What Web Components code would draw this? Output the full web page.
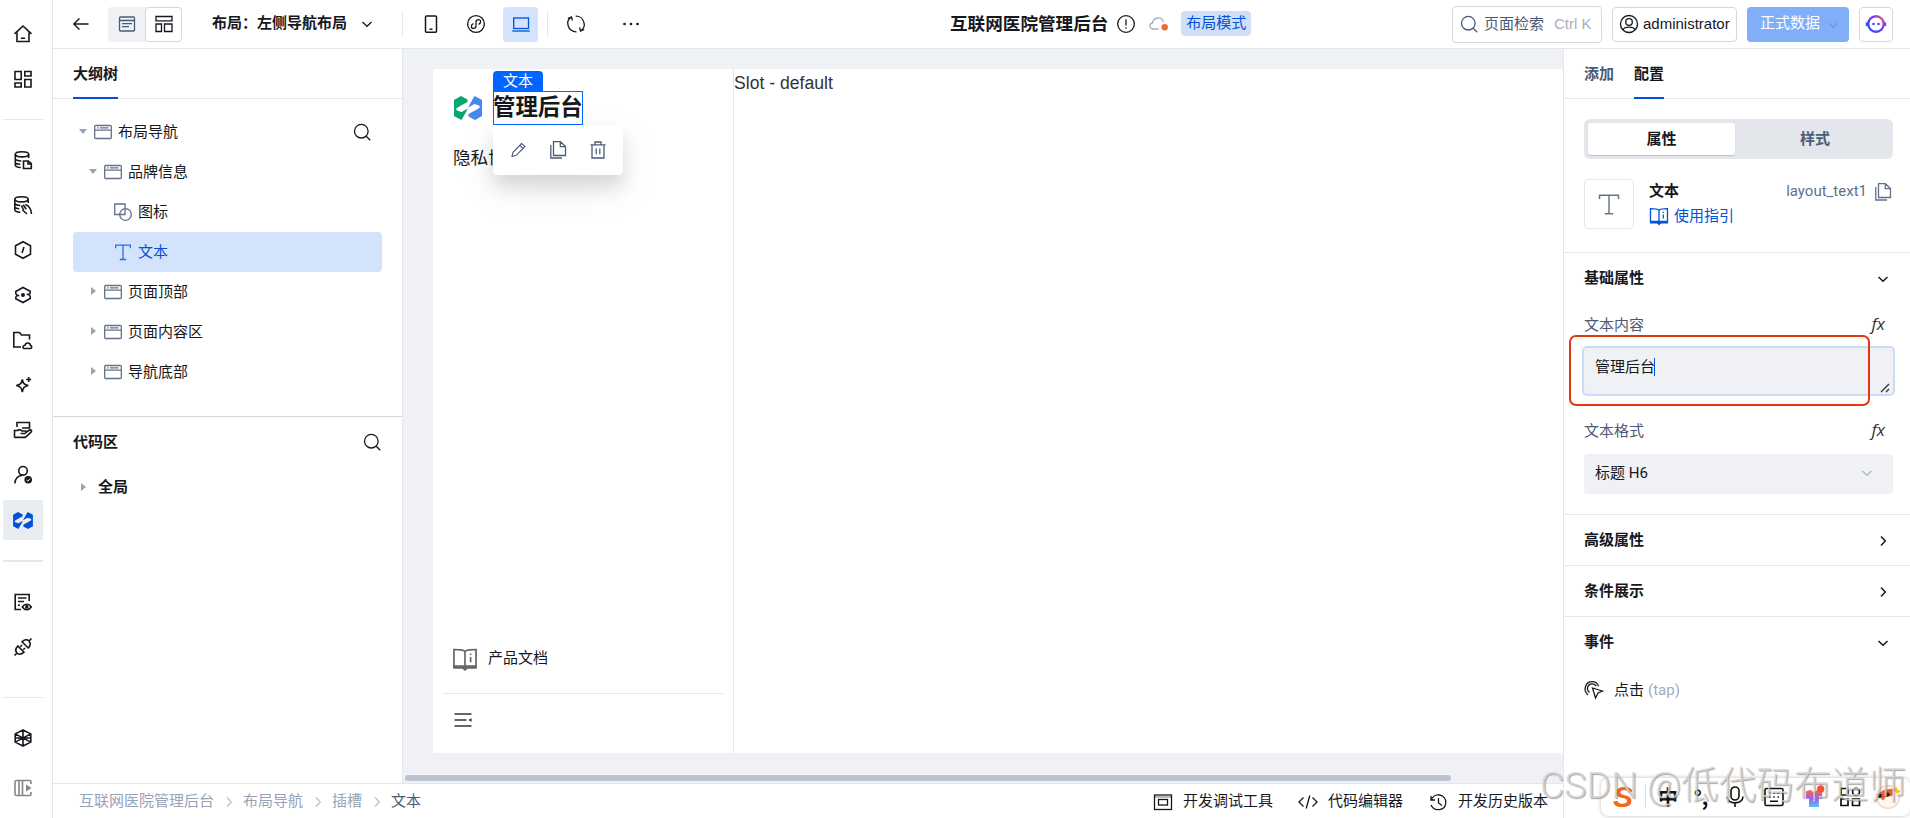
<!DOCTYPE html>
<html lang="zh-CN">
<head>
<meta charset="UTF-8">
<title>互联网医院管理后台</title>
<style>
  html, body { margin: 0; height: 100%; overflow: hidden; }
  body {
    font: 15px/20px "Liberation Sans", "Noto Sans CJK SC", sans-serif;
    color: #16181d;
    background: #fff;
  }
</style>
</head>
<body>
<app-shell>
  <side-rail slot="rail"></side-rail>
  <top-bar slot="header"></top-bar>
  <outline-panel slot="outline"></outline-panel>
  <design-canvas slot="canvas"></design-canvas>
  <config-panel slot="config"></config-panel>
  <status-bar slot="status"></status-bar>
</app-shell>
<ime-bar></ime-bar>
<water-mark>CSDN @低代码布道师</water-mark>

<script>
// all icons are drawn in a 20x20 box
const ICONS = {
  home: '<path d="M1.5 9.8 10 2l8.500 7.800M4 8.500V17.500H16V8.500M7.800 14.200H12.200"/>',
  grid: '<path d="M2 2.500H8.200V10.500H2zM11.800 2.500H18V7H11.800zM2 14H8.200V18H2zM11.800 10.500H18V18H11.800z"/>',
  dbfile: '<ellipse cx="9" cy="4.300" rx="6.700" ry="2.600"/><path d="M2.300 4.300V15c0 1.200 2 2.300 5.500 2.500M15.700 4.300V8M2.300 8.600c0 1.300 2.600 2.300 6 2.400M2.300 12.200c0 1.200 2 1.900 5 2.100M10.500 11H15.300L18.300 13.600V18.500H10.500zM15 11V14H18"/>',
  dbhand: '<ellipse cx="8.500" cy="4.300" rx="6.700" ry="2.600"/><path d="M1.800 4.300V14.800c0 1.300 2.400 2.300 5.500 2.500M15.200 4.300V8M1.800 8c0 1.300 2.600 2.300 5.500 2.500M1.800 11.500c0 1.200 2 2 4.500 2.300M8.500 10.500l2 4.500M10.200 9.800l3 4.500M12.300 9.500c3 1 5.800 4 6.200 9.500M9.500 15l4.500 4"/>',
  hex: '<path d="M10 1.700 17.500 5.800V14.200L10 18.300 2.500 14.200V5.800z"/><path d="M11 7 9 13"/>',
  hexdot: '<path d="M2.800 9V6.500L10 2.500 17.200 6.300V7.500c0 1.500-1.500 2.300-3.500 1.800M17.200 11V13.500L10 17.500 2.800 13.700V12.500c0-1.500 1.500-2.300 3.500-1.800M2.800 9c.8 1 2 1.700 3.500 1.700M17.200 11c-.8-1-2-1.700-3.500-1.700"/><circle cx="10" cy="10" r="1.200" fill="currentColor"/>',
  cloudfolder: '<path d="M8 17H.800V2.500H6.500L8.500 5H16.500V9.500M11 18.500h6.500c1.800-.4 1.500-3 0-3-.5-3.200-5-3.200-5.500-.2-2.500.2-2.600 3-1 3.200z"/>',
  spark: '<path d="M9.300 4.500c.8 4 1.800 5 6 6-4.200 1-5.200 2.200-6 6.500-.8-4.300-1.800-5.500-6-6.500 4.200-1 5.200-2 6-6zM15.700 2V7M13.200 4.500H18.200"/>',
  hand: '<path d="M4 7V2.500H16.500V8H9M1.500 17.500V10.500H4.500c2-1.500 3.500-.8 4.500.5h3.500c1 .5.500 2.500-1 2.500H7.500M12.500 12.500l4.800-2.800c1.700.3 1.500 1.800.5 2.700l-5.500 5H1.500"/>',
  userok: '<circle cx="10" cy="5.800" r="4.300"/><path d="M1.800 18.500c.3-5 3.500-8 7.500-8.300"/><circle cx="15.200" cy="14.800" r="3.800" fill="currentColor" stroke="none"/><path d="m13.500 15 1.300 1.200 2.200-2.500" stroke="#fff" stroke-width="1"/>',
  log: '<path d="M8 17.500H2.200V2.500H16.200V9M5 6H13.500M5 9.500H11M5 13.200H7M9.300 15c2.300-3.600 6.700-3.600 9 0-2.300 3.500-6.700 3.500-9 0z"/><circle cx="13.800" cy="14.900" r="1"/>',
  plug: '<path d="M1.500 18.500 4 16M16 4l2.500-2.500M4 16c-1.700-1.800-1.500-4.500.8-7l6.200 6.200c-2.500 2.300-5.200 2.500-7 .8zM9 4.800l6.200 6.200c2.500-2.300 2.500-5.200.8-7-1.800-1.700-4.700-1.500-7 .8zM7.300 9.700 9 8M10.300 12.700 12 11"/>',
  cube: '<path d="M10 2 17.800 5.900V14.100L10 18 2.200 14.100V5.900zM10 2V18M2.200 5.900 17.800 14.100M17.800 5.900 2.200 14.100M2.200 10H17.800"/>',
  panel: '<path d="M18 6V4c0-1-.5-1.500-1.500-1.500H3.500C2.500 2.500 2 3 2 4V16c0 1 .5 1.500 1.500 1.500H16.500c1 0 1.500-.5 1.500-1.500V14M6 2.500V17.500M9.500 2.500V17.500"/><path d="M13 6.500V13.500L18.500 10z" fill="currentColor" stroke="none"/>',
  back: '<path d="M2.800 10H17.500M8.500 4.500 2.800 10l5.700 5.500"/>',
  page: '<rect x="2.500" y="3" width="15" height="14" rx="1"/><path d="M2.500 6.500H17.500M5 9.700H15M5 12.700H12"/>',
  layout: '<path d="M2 2.500H18V6.800H2zM2 10H7.500V17.500H2zM10.500 10H18V17.500H10.500z"/>',
  down: '<path d="m5.500 8 4.500 4.300L14.500 8"/>',
  right: '<path d="m8 5.500 4.300 4.500L8 14.500"/>',
  phone: '<rect x="4.500" y="2" width="11" height="16.300" rx="1"/><path d="M8.500 15.200H11.500"/>',
  mini: '<circle cx="10" cy="10" r="8.400"/><path d="M7.500 9.700c-3 1-2.700 4.700 0 4.700 1.700 0 2.500-1.200 2.500-2.600V8.200c0-1.400.8-2.600 2.500-2.600 2.700 0 3 3.700 0 4.700"/>',
  laptop: '<rect x="2.700" y="4" width="14.800" height="10.500"/><path d="M1.300 17H18.700"/>',
  refresh: '<path d="M6 2.800C2.500 4.800 1 8.500 2.200 12c1 3.500 4.500 6 8.300 5.800M14 17.200c3.500-2 5-5.700 3.800-9.200C16.800 4.500 13.500 2 9.700 2.200M1.800 4.500 5.500 2.800 6.500 6.500M18.200 15.500l-3.700 1.700-1-3.700"/>',
  dots: '<g fill="currentColor" stroke="none"><circle cx="3.500" cy="10" r="1.300"/><circle cx="10" cy="10" r="1.300"/><circle cx="16.500" cy="10" r="1.300"/></g>',
  info: '<circle cx="10" cy="10" r="8.300"/><path d="M10 5.300V11.500M10 13.300V14.800"/>',
  cloud: '<path d="M10.500 15H5c-4-.3-4-5.700-.5-6 1-6.300 9.500-6.800 11-.8"/><circle cx="16.700" cy="13.300" r="3.200" fill="#ed6a32" stroke="none"/>',
  search: '<circle cx="9.300" cy="9.200" r="6.800"/><path d="m14.200 14.200 4 4"/>',
  user: '<circle cx="10" cy="10" r="8.500"/><circle cx="10" cy="8" r="3.300"/><path d="M4 15.800c1.500-3.500 10.500-3.500 12 0"/>',
  node: '<rect x="1.700" y="3.500" width="16.600" height="13" rx="1"/><path d="M1.700 8.200H18.300M4 5.900H5.500M7 5.900H15.500"/>',
  shape: '<path d="M8 12.500H1.700V2H12V6.500"/><circle cx="12.500" cy="12.500" r="5.800"/><path d="M8 12.500h4V6.700"/>',
  type: '<path d="M2.700 6.200V3.200H17.300V6.200M10 3.200V17.500M6.800 17.500H13.200"/>',
  pencil: '<path d="M4 16.500 5 12.300 13.500 3.500 17 6.500 8.200 15.300zM11.800 5.300l3.200 3.200"/>',
  copy: '<path d="M5.500 1.700H12.500L17.500 6.500V15.500H5.500zM12.300 2V6.700H17.200M2.800 5V18H14"/>',
  trash: '<path d="M2.500 4.800H17.500M7 4.500V2H13V4.500M4 5V18H16V5M8.200 8.500V14.300M11.800 8.500V14.300"/>',
  book: '<path d="M10 4.200C8.500 2.700 6.500 2.700 1.500 2.700V16H18.500V2.700C13.500 2.700 11.500 2.700 10 4.200V16"/><path d="M1 14.800H19V17.500H12L10 19.300 8 17.500H1z" fill="currentColor" stroke="none"/><path d="M14.300 8.500V12.500M14.300 5.800V7"/>',
  fold: '<path d="M1.500 4H18.500M1.500 10H13.500M1.500 16H18.500"/><path d="M18.500 8V12L15.500 10z" fill="currentColor" stroke="none"/>',
  tap: '<path d="M5.500 12.500C1.500 9 4 3.800 8 3.800c2 0 3.500 1 4.200 2.500M4 15C-1.500 10 1.500 1.700 8 1.600c3.300 0 5.700 1.800 6.600 4.700M8.500 8 18.500 11 14 13 11.500 18z"/>',
  window: '<rect x="1.500" y="3" width="17" height="14.500"/><rect x="5.500" y="7.500" width="9" height="5.500"/><path d="M1.500 5H18.500" stroke-width=".6"/>',
  code: '<path d="M5.500 5.500 1 10l4.500 4.500M14.500 5.500 19 10l-4.500 4.500M11.800 3.500 8.200 16.500"/>',
  history: '<path d="M3 4V8H7M3.200 8C6-.2 18 2 17.800 10.500 17.500 19 6 20 3 13M10.500 6V11L14 13.500"/>',
  mic: '<rect x="6" y="0" width="8" height="13" rx="4"/><path d="M2 9.500c0 8.500 16 8.500 16 0M10 16V20"/>',
  keyboard: '<rect x="1" y="1.500" width="18" height="17" rx="1.500"/><path d="M5 6H6.500M9.300 6H10.800M13.500 6H15M5 10H6.500M9.300 10H10.800M13.500 10H15M6 14.300H14"/>',
  apps: '<path d="M1 1.500H8V8H1zM1 12H8V18.500H1zM12.500 12H19.500V18.500H12.500z"/><circle cx="16" cy="4.800" r="3.500"/>',
  shirt: '<defs><linearGradient id="g" x2="0" y2="1"><stop stop-color="#ff6a3c"/><stop offset=".5" stop-color="#a05cf5"/><stop offset="1" stop-color="#4cc4ff"/></linearGradient></defs><path d="M1 4 6 2l4 3 4-3 5 2v8h-3.500v9h-11V12H1z" fill="url(#g)" stroke="none"/><circle cx="17.500" cy="1" r="4" fill="#ff4d2e" stroke="none"/>',
  face: '<circle cx="10" cy="10" r="9.500" fill="#fff8f2" stroke="#f7d5c4"/><path d="M0 8 7 4l8-1-1 6-6 1-2 3-3-3z" fill="#e8602c" stroke="none"/><circle cx="3" cy="9" r="1.800" fill="#111" stroke="none"/><circle cx="9.500" cy="8" r="1.800" fill="#111" stroke="none"/><path d="m17 1 1 3 3 1-4 2-2-3z" fill="#ffc41f" stroke="none"/>',
  robot: '<defs><linearGradient id="r" x1="0" y1="1" x2="1" y2="0"><stop stop-color="#2354ff"/><stop offset=".6" stop-color="#6a3ff5"/><stop offset="1" stop-color="#ff5a5a"/></linearGradient></defs><circle cx="10" cy="10" r="7.800" stroke="url(#r)" stroke-width="2.400"/><path d="M1 8.500V12" stroke="#2354ff" stroke-width="2.500"/><path d="M19 8.500V12" stroke="#7a45f5" stroke-width="2.500"/><circle cx="7.500" cy="10" r="1.300" fill="#5b3ff0" stroke="none"/><circle cx="12.500" cy="10" r="1.300" fill="#5b3ff0" stroke="none"/>'
};

class XIcon extends HTMLElement {
  connectedCallback() {
    const size = this.getAttribute('size') || 20;
    const stroke = this.getAttribute('stroke') || 1.3;
    this.attachShadow({ mode: 'open' }).innerHTML = `
      <style>
        :host { display: inline-flex; flex: none; }
        svg { display: block; overflow: visible; }
      </style>
      <svg width="${size}" height="${size}" viewBox="0 0 20 20" fill="none" stroke="currentColor" stroke-width="${stroke}">${ICONS[this.getAttribute('name')]}</svg>
    `;
  }
}

// brand mark: two interlocked halves, coloured by --left and --right
class BrandLogo extends HTMLElement {
  connectedCallback() {
    this.attachShadow({ mode: 'open' }).innerHTML = `
      <style>
        :host { display: inline-flex; flex: none; width: 28px; height: 24px; }
        svg { display: block; width: 100%; height: 100%; }
      </style>
      <svg viewBox="0 0 28 24">
        <path fill="var(--left, #07a66d)" d="M0 4 7 0 13.500 3.500V6L3.500 11.500 2 13l1 1.500L7.500 16 14 12.500 7.500 24 0 20z"/>
        <path fill="var(--right, #4787f0)" d="M28 20 21 24 14.500 20.500V18L24.500 12.500 26 11 25 9.500 20.500 8 14 11.500 20.500 0 28 4z"/>
      </svg>
    `;
  }
}

class AppShell extends HTMLElement {
  connectedCallback() {
    this.attachShadow({ mode: 'open' }).innerHTML = `
      <style>
        :host { display: flex; width: 1910px; height: 818px; }
        .main { flex: 1; min-width: 0; display: flex; flex-direction: column; }
        .body { flex: 1; min-height: 0; display: flex; }
        .work { flex: 1; min-width: 0; display: flex; flex-direction: column; }
        .stage { flex: 1; min-height: 0; display: flex; }
      </style>
      <slot name="rail"></slot>
      <div class="main">
        <slot name="header"></slot>
        <div class="body">
          <div class="work">
            <div class="stage"><slot name="outline"></slot><slot name="canvas"></slot></div>
            <slot name="status"></slot>
          </div>
          <slot name="config"></slot>
        </div>
      </div>
    `;
  }
}

class SideRail extends HTMLElement {
  connectedCallback() {
    const item = (name) => `<div class="item"><x-icon name="${name}" stroke="1.600"></x-icon></div>`;
    this.attachShadow({ mode: 'open' }).innerHTML = `
      <style>
        :host {
          display: flex;
          flex-direction: column;
          gap: 5px;
          box-sizing: border-box;
          width: 53px;
          padding: 14px 9px 0 3px;
          border-right: 1px solid #e3e6eb;
        }
        .item { flex: none; width: 40px; height: 40px; display: flex; align-items: center; justify-content: center; }
        .active { background: #e9edf1; }
        .active brand-logo { width: 20px; height: 17px; --left: #0052d9; --right: #0052d9; }
        hr { flex: none; width: 40px; height: 1px; margin: 15px 0; border: 0; background: #e3e6eb; }
        hr.thick { height: 2px; margin: 15px 0; }
        hr.far { margin-top: 25px; }
        .muted { color: #85878b; margin-top: 5px; }
      </style>
      ${item('home')}${item('grid')}
      <hr>
      ${['dbfile', 'dbhand', 'hex', 'hexdot', 'cloudfolder', 'spark', 'hand', 'userok'].map(item).join('')}
      <div class="item active"><brand-logo></brand-logo></div>
      <hr class="thick">
      ${item('log')}${item('plug')}
      <hr class="far">
      ${item('cube')}
      <div class="item muted"><x-icon name="panel" stroke="1.600"></x-icon></div>
    `;
  }
}

class TopBar extends HTMLElement {
  connectedCallback() {
    this.attachShadow({ mode: 'open' }).innerHTML = `
      <style>
        :host {
          display: grid;
          grid-template-columns: 897px 1fr auto;
          flex: none;
          box-sizing: border-box;
          height: 49px;
          padding-right: 17px;
          border-bottom: 1px solid #e3e6eb;
        }
        :host > div { display: flex; align-items: center; }
        .left { padding-left: 18px; }
        .seg { display: flex; margin-left: 17px; background: #eff1f5; border-radius: 4px; color: #4b5b76; }
        .seg span { display: flex; align-items: center; justify-content: center; box-sizing: border-box; width: 37px; height: 35px; }
        .seg .on { background: #fff; border: 1px solid #d3d8e2; border-radius: 4px; color: #16181d; }
        .name { font-weight: 700; margin: 0 10px 2px 30px; }
        .line { width: 1px; height: 24px; background: #e3e6eb; }
        .dev { display: flex; align-items: center; justify-content: center; width: 35px; height: 35px; border-radius: 4px; }
        .dev.on { background: #d3e3fb; color: #0052d9; }
        h1 { margin: 0 8px 0 0; font-size: 17.6px; line-height: 24px; }
        .cloud { margin: 0 13px 0 12px; color: #a5b0c2; }
        .tag { padding: 2px 5px 3px; margin-bottom: 1px; background: #cfdffa; border-radius: 4px; color: #0052d9; }
        .box { display: flex; align-items: center; box-sizing: border-box; height: 35px; border: 1px solid #d3d8e2; border-radius: 4px; }
        .search { width: 150px; height: 37px; padding-left: 6px; color: #4b5b76; margin-right: 10px; }
        .search span { margin: 0 10px 0 5px; }
        .search em { font-style: normal; color: #a5b0c2; }
        .user { width: 125px; padding-left: 6px; margin-right: 10px; gap: 4px; }
        .data { width: 102px; padding: 0 7px 2px 13px; justify-content: space-between; background: #80aef9; border: 0; color: #fff; margin-right: 10px; }
        .data x-icon { color: #6f8fc7; margin-top: 4px; }
        .bot { width: 34px; justify-content: center; }
      </style>
      <div class="left">
        <x-icon name="back" stroke="1.400"></x-icon>
        <div class="seg"><span><x-icon name="page"></x-icon></span><span class="on"><x-icon name="layout"></x-icon></span></div>
        <span class="name">布局：左侧导航布局</span>
        <x-icon name="down"></x-icon>
        <i class="line" style="margin-left:25px"></i>
        <span class="dev" style="margin-left:10px"><x-icon name="phone" stroke="1.500"></x-icon></span>
        <span class="dev" style="margin-left:10px"><x-icon name="mini"></x-icon></span>
        <span class="dev on" style="margin-left:10px"><x-icon name="laptop"></x-icon></span>
        <i class="line" style="margin-left:9px"></i>
        <span class="dev" style="margin-left:10px"><x-icon name="refresh"></x-icon></span>
        <span class="dev" style="margin-left:20px"><x-icon name="dots"></x-icon></span>
      </div>
      <div>
        <h1>互联网医院管理后台</h1>
        <x-icon name="info"></x-icon>
        <x-icon class="cloud" name="cloud"></x-icon>
        <span class="tag">布局模式</span>
      </div>
      <div>
        <div class="box search"><x-icon name="search"></x-icon><span>页面检索</span><em>Ctrl K</em></div>
        <div class="box user"><x-icon name="user"></x-icon>administrator</div>
        <div class="box data">正式数据<x-icon name="down" size="18"></x-icon></div>
        <div class="box bot"><x-icon name="robot"></x-icon></div>
      </div>
    `;
  }
}

class TreeNode extends HTMLElement {
  connectedCallback() {
    const level = +this.getAttribute('level');
    const state = this.getAttribute('state');
    this.attachShadow({ mode: 'open' }).innerHTML = `
      <style>
        :host { display: flex; align-items: center; height: 40px; padding-left: ${level * 10}px; border-radius: 4px; }
        :host([selected]) { background: #d3e3fb; color: #0052d9; }
        .caret { width: 8px; margin: 0 6px; display: flex; justify-content: center; }
        .open::before { content: ''; margin-top: -2px; border: 4.500px solid transparent; border-top: 5px solid #97a3b7; border-bottom: 0; }
        .closed::before { content: ''; margin-top: -2px; border: 4.500px solid transparent; border-left: 5px solid #97a3b7; border-right: 0; }
        x-icon { margin-right: 5px; color: #63718b; }
        :host([selected]) x-icon { color: #2a6fe0; }
      </style>
      <span class="caret ${state || ''}"></span>
      <x-icon name="${this.getAttribute('icon') || 'node'}"></x-icon>
      <slot></slot>
    `;
  }
}

class OutlinePanel extends HTMLElement {
  connectedCallback() {
    this.attachShadow({ mode: 'open' }).innerHTML = `
      <style>
        :host { display: flex; flex-direction: column; flex: none; box-sizing: border-box; width: 350px; border-right: 1px solid #e3e6eb; }
        .tabs { box-sizing: border-box; height: 50px; padding-left: 20px; border-bottom: 1px solid #e3e6eb; font-weight: 700; }
        .tabs span { display: inline-block; box-sizing: border-box; height: 50px; padding-top: 15px; border-bottom: 2px solid #0052d9; }
        .tree { position: relative; box-sizing: border-box; height: 317px; padding: 13px 20px 0; }
        .find { position: absolute; left: 299px; top: 23px; }
        .code { padding: 15px 20px 0; border-top: 1px solid #d3d8e2; font-weight: 700; }
        .head { display: flex; justify-content: space-between; align-items: center; }
        .global { display: flex; align-items: center; margin-top: 25px; padding-left: 8px; gap: 12px; }
        .global::before { content: ''; border: 4.500px solid transparent; border-left: 5px solid #97a3b7; border-right: 0; }
      </style>
      <div class="tabs"><span>大纲树</span></div>
      <div class="tree">
        <tree-node level="0" state="open">布局导航</tree-node>
        <tree-node level="1" state="open">品牌信息</tree-node>
        <tree-node level="2" icon="shape">图标</tree-node>
        <tree-node level="2" icon="type" selected>文本</tree-node>
        <tree-node level="1" state="closed">页面顶部</tree-node>
        <tree-node level="1" state="closed">页面内容区</tree-node>
        <tree-node level="1" state="closed">导航底部</tree-node>
        <x-icon class="find" name="search"></x-icon>
      </div>
      <div class="code">
        <div class="head">代码区<x-icon name="search"></x-icon></div>
        <div class="global">全局</div>
      </div>
    `;
  }
}

// selection frame with its label above and its actions below
class SelectedNode extends HTMLElement {
  connectedCallback() {
    this.attachShadow({ mode: 'open' }).innerHTML = `
      <style>
        :host { display: block; position: relative; box-sizing: border-box; width: 90px; height: 34px; border: 1px solid #0066ff; font-weight: 700; font-size: 22.4px; line-height: 31px; text-indent: -1px; white-space: nowrap; }
        .label { position: absolute; left: -1px; top: -21px; width: 50px; height: 20px; background: #0066ff; border-radius: 4px 4px 0 0; color: #fff; font: 15px/18px "Noto Sans CJK SC", sans-serif; text-align: center; text-indent: 0; }
        .actions { position: absolute; z-index: 2; left: -1px; top: 33px; box-sizing: border-box; width: 130px; height: 50px; padding: 0 15px; display: flex; align-items: center; justify-content: space-between; background: #fff; border-radius: 4px; box-shadow: 0 12px 18px rgba(0, 0, 0, .12), 0 14px 46px rgba(0, 0, 0, .07); color: #4b5b76; }
      </style>
      <span class="label">${this.getAttribute('label')}</span>
      <slot></slot>
      <div class="actions"><x-icon name="pencil" stroke="1.100"></x-icon><x-icon name="copy"></x-icon><x-icon name="trash"></x-icon></div>
    `;
  }
}

class DesignCanvas extends HTMLElement {
  connectedCallback() {
    this.attachShadow({ mode: 'open' }).innerHTML = `
      <style>
        :host { display: flex; flex-direction: column; flex: 1; min-width: 0; background: #eff1f5; }
        .page { display: flex; height: 684px; margin: 20px 0 0 30px; background: #fff; }
        .nav { display: flex; flex-direction: column; box-sizing: border-box; width: 301px; padding: 22px 10px 0; border-right: 1px solid #e3e6eb; }
        .brand { display: flex; align-items: center; gap: 11px; padding-left: 11px; }
        .privacy { padding: 21px 0 0 10px; font-size: 17.600px; line-height: 24px; }
        .docs { display: flex; align-items: center; gap: 10px; margin-top: auto; padding: 0 0 21px 9px; }
        .docs x-icon { color: #666; margin-top: 3px; }
        .fold { height: 60px; padding: 16px 0 0 10px; box-sizing: border-box; border-top: 1px solid #e3e6eb; color: #333; }
        .content { font-size: 17.600px; line-height: 26px; color: #333; padding: 1px 0; }
        .scroll { width: 1046px; height: 6px; margin: 22px 0 0 2px; border-radius: 3px; background: #bbc4d0; }
      </style>
      <div class="page">
        <div class="nav">
          <div class="brand"><brand-logo></brand-logo><selected-node label="文本">管理后台</selected-node></div>
          <div class="privacy">隐私协议</div>
          <div class="docs"><x-icon name="book" size="26"></x-icon>产品文档</div>
          <div class="fold"><x-icon name="fold" stroke="1.700"></x-icon></div>
        </div>
        <div class="content">Slot - default</div>
      </div>
      <div class="scroll"></div>
    `;
  }
}

class PropSection extends HTMLElement {
  connectedCallback() {
    this.attachShadow({ mode: 'open' }).innerHTML = `
      <style>
        :host { display: block; border-top: 1px solid #e3e6eb; padding: 0 17px 0 20px; }
        .head { display: flex; align-items: center; justify-content: space-between; height: 50px; font-weight: 700; }
        .head x-icon { margin-top: 1px; }
      </style>
      <div class="head">${this.getAttribute('heading')}<x-icon name="${this.hasAttribute('open') ? 'down' : 'right'}" stroke="1.500"></x-icon></div>
      <slot></slot>
    `;
  }
}

class ConfigPanel extends HTMLElement {
  connectedCallback() {
    this.attachShadow({ mode: 'open' }).innerHTML = `
      <style>
        :host { display: block; flex: none; box-sizing: border-box; width: 347px; border-left: 1px solid #e3e6eb; font-family: Roboto, "Noto Sans CJK SC", sans-serif; }
        .tabs { display: flex; gap: 20px; box-sizing: border-box; height: 50px; padding-left: 20px; border-bottom: 1px solid #e3e6eb; font-weight: 700; color: #4b5b76; }
        .tabs span { box-sizing: border-box; height: 50px; padding-top: 15px; }
        .tabs .on { border-bottom: 2px solid #0052d9; color: #16181d; }
        .seg { display: flex; box-sizing: border-box; height: 40px; margin: 20px 17px 20px 20px; padding: 4px 0 4px 4px; background: #e3e6eb; border-radius: 6px; font-weight: 700; color: #4b5b76; }
        .seg span { flex: 1; line-height: 32px; text-align: center; padding-left: 2px; }
        .seg .on { flex: 0 0 147px; padding: 0; background: #fff; border-radius: 3px; box-shadow: 0 1px 1px #b9c2d1; color: #16181d; }
        .intro { display: flex; height: 50px; padding: 0 18px 23px 20px; }
        .thumb { display: flex; align-items: center; justify-content: center; box-sizing: border-box; width: 50px; height: 50px; margin-right: 15px; border: 1px solid #e3e6eb; border-radius: 4px; color: #63718b; }
        .intro b { display: block; line-height: 24px; }
        .guide { display: flex; align-items: center; gap: 5px; margin-top: 3px; color: #0052d9; }
        .id { display: flex; gap: 6px; margin: 0 -1px 0 auto; line-height: 24px; color: #63718b; }
        .id x-icon { margin-top: 3px; }
        .field { display: flex; justify-content: space-between; color: #4b5b76; }
        .fx { margin-right: 8px; font: italic 17px/17px "Open Sans", sans-serif; color: #333; }
        .area { position: relative; box-sizing: border-box; height: 50px; margin: 11px -2px 25px; padding: 9px 11px; background: #eff1f5; border: 2px solid #cbdcf8; border-radius: 5px; }
        .area::after { content: ''; display: inline-block; width: 1px; height: 18px; margin-left: -1px; background: #0052d9; vertical-align: -4px; }
        .area svg { position: absolute; right: 3px; bottom: 1px; }
        .mark { position: absolute; left: -15px; top: -13px; box-sizing: border-box; width: 301px; height: 71px; border: 2px solid #dc3a12; border-radius: 7px; }
        .select { display: flex; align-items: center; justify-content: space-between; box-sizing: border-box; height: 40px; margin: 13px 0 20px; padding: 0 16px 3px 11px; background: #eff1f5; border-radius: 4px; }
        .select x-icon { color: #b0b7c3; }
        .event { display: flex; align-items: center; margin-top: 13px; }
        .event span { margin: 0 4px 0 10px; }
        .event em { font-style: normal; color: #a0abc0; }
      </style>
      <div class="tabs"><span>添加</span><span class="on">配置</span></div>
      <div class="seg"><span class="on">属性</span><span>样式</span></div>
      <div class="intro">
        <div class="thumb"><x-icon name="type" size="26" stroke="1.100"></x-icon></div>
        <div>
          <b>文本</b>
          <div class="guide"><x-icon name="book"></x-icon>使用指引</div>
        </div>
        <div class="id">layout_text1<x-icon name="copy"></x-icon></div>
      </div>
      <prop-section heading="基础属性" open>
        <div class="field" style="margin-top:12px">文本内容<span class="fx">fx</span></div>
        <div class="area">管理后台<svg width="10" height="10" stroke="#333" stroke-width="1.300"><path d="M1 9 9 1M6 9l3-3"/></svg><i class="mark"></i></div>
        <div class="field">文本格式<span class="fx">fx</span></div>
        <div class="select">标题 H6<x-icon name="down"></x-icon></div>
      </prop-section>
      <prop-section heading="高级属性"></prop-section>
      <prop-section heading="条件展示"></prop-section>
      <prop-section heading="事件" open>
        <div class="event"><x-icon name="tap"></x-icon><span>点击</span><em>(tap)</em></div>
      </prop-section>
    `;
  }
}

class StatusBar extends HTMLElement {
  connectedCallback() {
    const crumbs = ['互联网医院管理后台', '布局导航', '插槽'];
    this.attachShadow({ mode: 'open' }).innerHTML = `
      <style>
        :host { display: flex; flex: none; align-items: center; justify-content: space-between; box-sizing: border-box; height: 35px; padding: 0 15px 1px 26px; border-top: 1px solid #e3e6eb; }
        div { display: flex; align-items: center; }
        .path { color: #97a3b7; }
        .path x-icon { margin: 3px 4.500px 0 4.500px; color: #b9c2d1; }
        .path b { font-weight: 400; color: #4b5b76; }
        .tools x-icon { margin: 3px 10px 0 25px; }
      </style>
      <div class="path">${crumbs.map((c) => `${c}<x-icon name="right"></x-icon>`).join('')}<b>文本</b></div>
      <div class="tools">
        <x-icon name="window"></x-icon>开发调试工具
        <x-icon name="code"></x-icon>代码编辑器
        <x-icon name="history"></x-icon>开发历史版本
      </div>
    `;
  }
}

class ImeBar extends HTMLElement {
  connectedCallback() {
    this.attachShadow({ mode: 'open' }).innerHTML = `
      <style>
        :host { position: absolute; left: 1601px; top: 778px; box-sizing: border-box; width: 309px; height: 38px; padding-left: 8px; display: grid; grid-template-columns: 28px 16px 30px 36px 32px 46px 34px 38px 38px; align-items: center; justify-items: center; background: #fff; border-radius: 8px; box-shadow: 0 0 4px rgba(0, 0, 0, .25); color: #111; }
        .s { font: italic 900 30px/30px "Liberation Sans", sans-serif; color: #f26a13; }
        i { width: 1px; height: 24px; background: #ddd; }
        b { font: 700 20px/24px "Noto Sans CJK SC", sans-serif; }
      </style>
      <span class="s">S</span><i></i><b>中</b><b>°,</b>
      <x-icon name="mic" stroke="1.600"></x-icon><x-icon name="keyboard" stroke="1.600"></x-icon><x-icon name="shirt" size="18"></x-icon><x-icon name="apps" stroke="1.700"></x-icon><x-icon name="face" size="24"></x-icon>
    `;
  }
}

class WaterMark extends HTMLElement {
  connectedCallback() {
    this.attachShadow({ mode: 'open' }).innerHTML = `
      <style>
        :host { position: absolute; left: 1540px; top: 765px; font: 300 37.500px/40px Roboto, "Noto Sans CJK SC", sans-serif; white-space: nowrap; color: rgba(215, 215, 215, .8); text-shadow: 1px 1px 1px rgba(110, 110, 110, .6); }
      </style>
      <slot></slot>
    `;
  }
}

customElements.define('x-icon', XIcon);
customElements.define('brand-logo', BrandLogo);
customElements.define('app-shell', AppShell);
customElements.define('side-rail', SideRail);
customElements.define('top-bar', TopBar);
customElements.define('tree-node', TreeNode);
customElements.define('outline-panel', OutlinePanel);
customElements.define('selected-node', SelectedNode);
customElements.define('design-canvas', DesignCanvas);
customElements.define('prop-section', PropSection);
customElements.define('config-panel', ConfigPanel);
customElements.define('status-bar', StatusBar);
customElements.define('ime-bar', ImeBar);
customElements.define('water-mark', WaterMark);
</script>
</body>
</html>
